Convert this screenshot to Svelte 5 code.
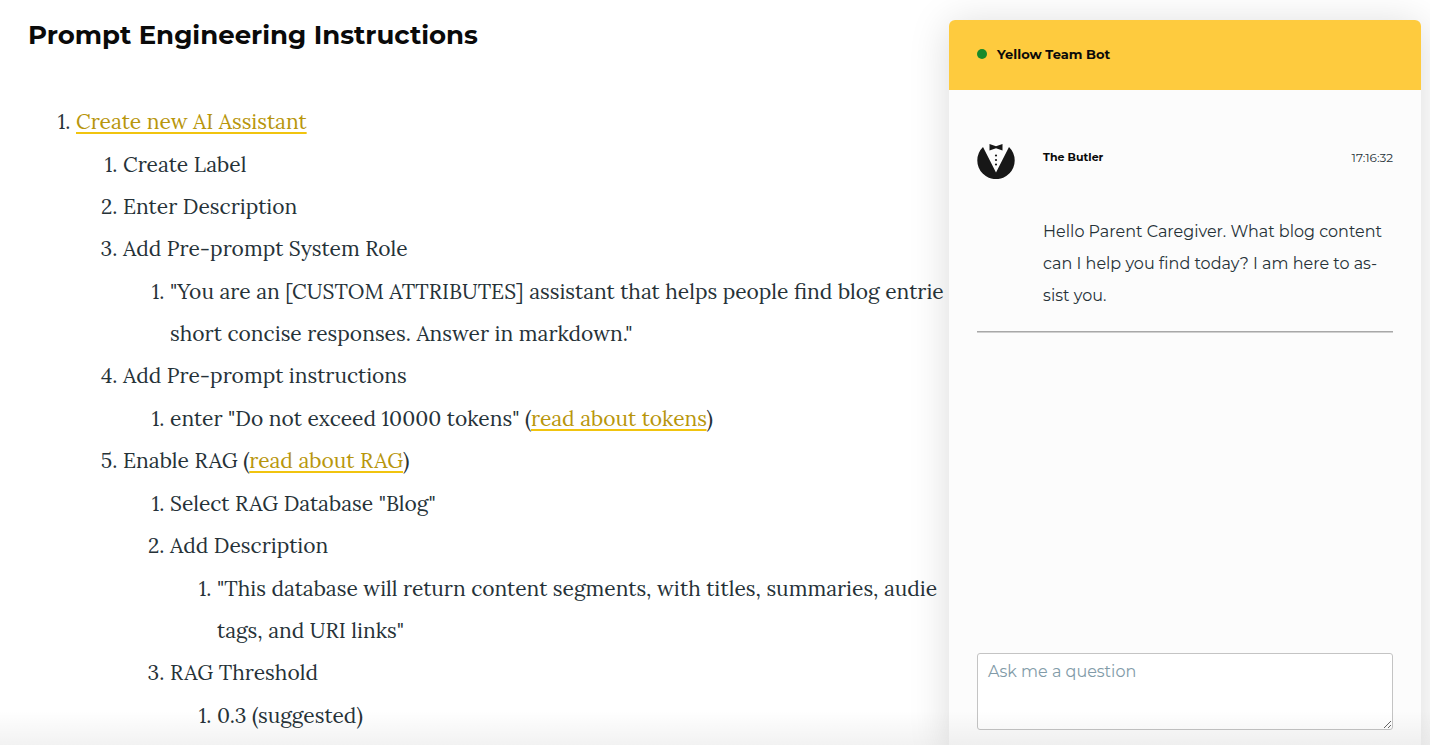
<script>
  let question = $state('');
</script>

<div class="page">
  <main>
    <h1>Prompt Engineering Instructions</h1>
    <ol class="steps">
      <li><a href="#assistant">Create new AI Assistant</a>
        <ol>
          <li>Create Label</li>
          <li>Enter Description</li>
          <li>Add Pre-prompt System Role
            <ol><li>"You are an [CUSTOM ATTRIBUTES] assistant that helps people find blog entrie<br />short concise responses. Answer in markdown."</li></ol>
          </li>
          <li>Add Pre-prompt instructions
            <ol><li>enter "Do not exceed 10000 tokens" (<a href="#tokens">read about tokens</a>)</li></ol>
          </li>
          <li>Enable RAG (<a href="#rag">read about RAG</a>)
            <ol>
              <li>Select RAG Database "Blog"</li>
              <li>Add Description
                <ol><li>"This database will return content segments, with titles, summaries, audie<br />tags, and URI links"</li></ol>
              </li>
              <li>RAG Threshold
                <ol><li>0.3 (suggested)</li></ol>
              </li>
            </ol>
          </li>
        </ol>
      </li>
    </ol>
  </main>

  <aside>
    <header><span class="dot"></span><h2>Yellow Team Bot</h2></header>
    <div class="chat">
      <article>
        <svg viewBox="0 0 38 38" aria-hidden="true">
          <path d="M6 6 L19 31.500 L32 6 A18.700 18.700 0 1 1 6 6Z" fill="#171717" />
          <path d="M12.500 3 L19 5.300 L25.500 3 V9.500 L19 7.200 L12.500 9.500Z" fill="#171717" />
          <circle cx="19" cy="14.500" r="1.100" fill="#171717" />
          <circle cx="19" cy="19" r="1.100" fill="#171717" />
          <circle cx="19" cy="23.500" r="1.100" fill="#171717" />
        </svg>
        <div class="message">
          <div class="meta"><strong>The Butler</strong><time>17:16:32</time></div>
          <p>Hello Parent Caregiver. What blog content can I help you find today? I am here to as-<br />sist you.</p>
        </div>
      </article>
      <hr />
      <textarea bind:value={question} aria-label="Ask me a question" placeholder="Ask me a question"></textarea>
    </div>
  </aside>
  <div class="fade"></div>
</div>

<style>
  :global(body) { margin: 0; background: #fff; }
  .page { height: 100vh; overflow: hidden; position: relative; }
  main {
    padding: 17px 28px;
    white-space: nowrap;
    font-family: Lora, "Liberation Serif", serif;
    font-size: 21px;
    line-height: 42px;
    color: #263238;
  }
  h1 {
    margin: 0 0 48px;
    font: 700 26px/36px Montserrat, Inter, sans-serif;
    color: #0a0a0a;
  }
  ol { margin: 1px 0 0; padding-left: 47px; }
  .steps { margin: 0; padding-left: 48px; }
  li::marker { font-variant-numeric: normal; }
  a {
    color: #b8960c;
    text-decoration: underline 2px #f1c40f;
    text-underline-offset: 3px;
    text-decoration-skip-ink: none;
  }
  aside {
    position: absolute;
    top: 20px;
    right: 9px;
    bottom: 0;
    width: 33%;
    min-width: 320px;
    display: flex;
    flex-direction: column;
    border-radius: 6px 6px 0 0;
    background: #fcfcfc;
    box-shadow: 0 4px 40px rgba(0, 0, 0, 0.15);
    font-family: Montserrat, Inter, sans-serif;
    color: #263238;
  }
  header {
    display: flex;
    align-items: center;
    gap: 10px;
    box-sizing: border-box;
    height: 70px;
    padding: 0 28px 2px;
    border-radius: 6px 6px 0 0;
    background: #fecb3e;
  }
  h2 { margin: 0; font-size: 13px; font-weight: 700; color: #0a0a0a; }
  .dot { width: 10px; height: 10px; border-radius: 50%; background: #178a2b; }
  .chat {
    flex: 1;
    display: flex;
    flex-direction: column;
    padding: 51px 28px 18px;
  }
  article { display: flex; gap: 28px; }
  svg { flex: none; width: 38px; height: 38px; }
  .message { flex: 1; }
  .meta {
    display: flex;
    justify-content: space-between;
    align-items: center;
    height: 32px;
    font-size: 12px;
  }
  strong { font-size: 11px; color: #0a0a0a; }
  p { margin: 43px 0 0; font-size: 16px; line-height: 32px; }
  hr {
    width: 100%;
    box-sizing: border-box;
    height: 2px;
    margin: 19px 0 0;
    border: 0;
    border-top: 1px solid #a8a8a8;
    background: #d0d0d0;
  }
  textarea {
    box-sizing: border-box;
    width: 100%;
    height: 77px;
    margin-top: auto;
    padding: 8px 10px;
    border: 1px solid #c4c4c4;
    border-radius: 3px;
    background: #fff;
    font: 16px/20px Montserrat, Inter, sans-serif;
    color: #263238;
  }
  textarea::placeholder { color: #829ba8; }
  .fade {
    position: absolute;
    inset: auto 0 0;
    height: 34px;
    border-bottom: 3px solid #fff;
    background: linear-gradient(transparent, rgba(0, 0, 0, 0.05));
    pointer-events: none;
  }
</style>
